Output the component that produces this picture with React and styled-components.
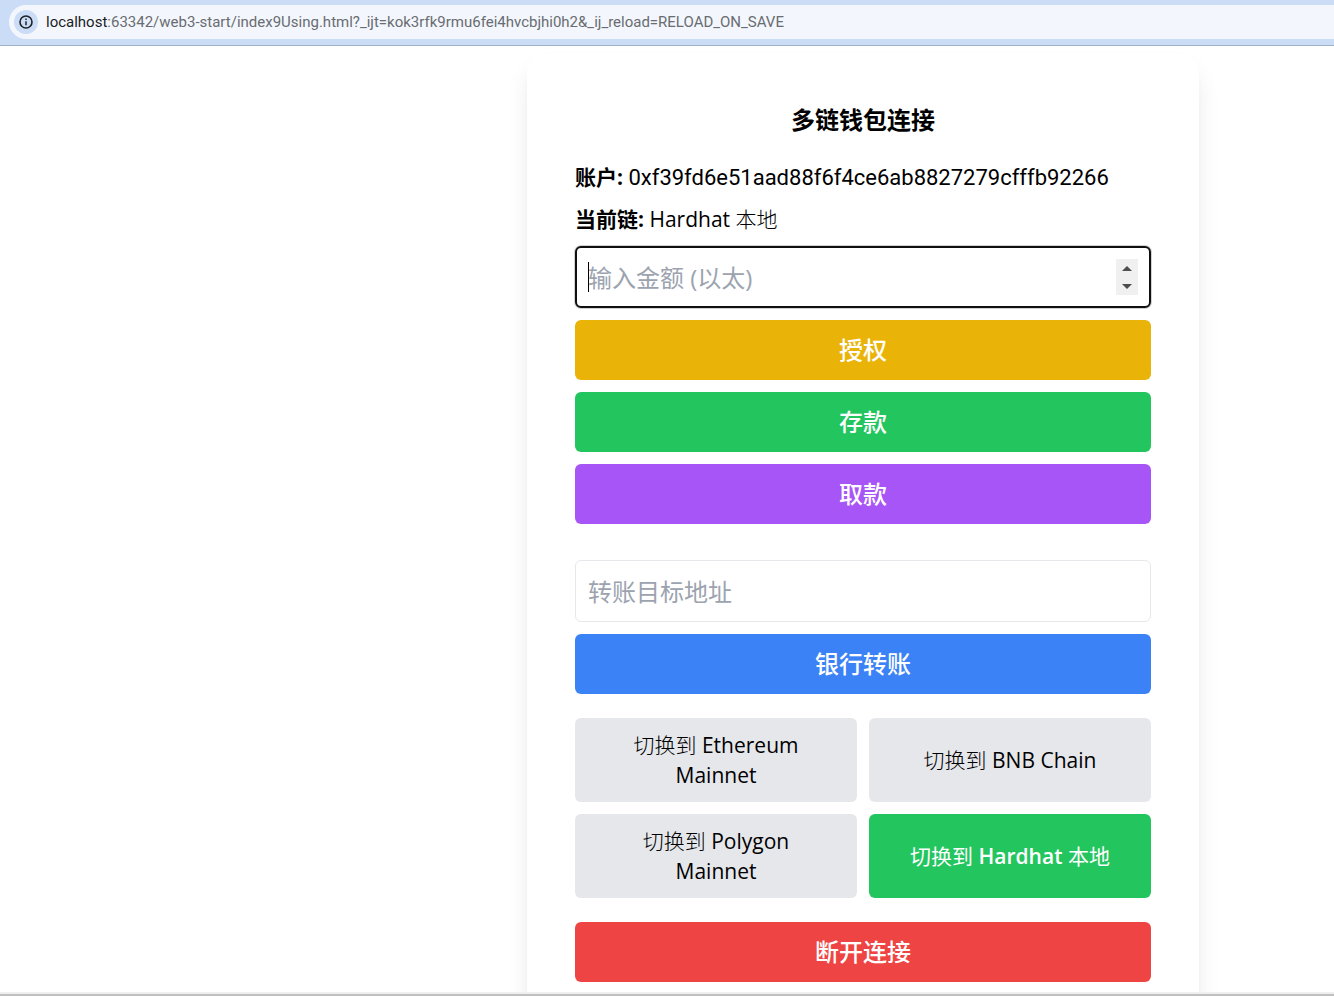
import React, { useRef, useState } from "react";
import styled, { createGlobalStyle } from "styled-components";

const GlobalStyle = createGlobalStyle`
  *, *::before, *::after { box-sizing: border-box; }
  body {
    margin: 0;
    background: #fff;
    color: #000;
    font-family: "Open Sans", "Noto Sans CJK SC", sans-serif;
  }
  button, input { font-family: inherit; color: inherit; }
`;

const Shell = styled.div`
  display: flex;
  flex-direction: column;
  height: 100vh;
`;

const BrowserBar = styled.header`
  flex: none;
  padding: 5px 0 6px 9px;
  background: #cbdcf6;
  border-bottom: 1px solid #9fb1cd;
`;

const AddressField = styled.div`
  display: flex;
  align-items: center;
  gap: 8px;
  height: 34px;
  padding-left: 5px;
  border-radius: 17px 0 0 17px;
  background: #f3f7fd;
`;

const SiteInfo = styled.button`
  display: grid;
  place-items: center;
  width: 24px;
  height: 24px;
  padding: 0;
  border: 0;
  border-radius: 50%;
  background: #cbdcf6;
  color: #1f2328;
`;

const Address = styled.a`
  color: #696c71;
  font-family: Roboto, "Open Sans", sans-serif;
  font-size: 15px;
  line-height: 20px;
  text-decoration: none;
  white-space: nowrap;
`;

const Host = styled.span`
  color: #1b1c1e;
`;

const Viewport = styled.main`
  flex: 1;
  min-height: 0;
  overflow: auto;
  scrollbar-width: none;
  display: grid;
  grid-template-columns: 527fr minmax(auto, 672px) 135fr;
  align-items: start;
  padding-top: 8px;
`;

const Card = styled.section`
  grid-column: 2;
  display: flex;
  flex-direction: column;
  gap: 12px;
  padding: 48px;
  border-radius: 18px;
  background: #fff;
  box-shadow: 0 15px 24px -3px rgba(0, 0, 0, 0.1), 0 6px 9px -6px rgba(0, 0, 0, 0.1);
`;

const Title = styled.h1`
  margin: 0 0 12px;
  font-size: 24px;
  font-weight: 700;
  line-height: 36px;
  text-align: center;
`;

const InfoLine = styled.p`
  margin: 0;
  font-size: 21px;
  line-height: 30px;
`;

const AccountAddress = styled.span`
  font-family: Roboto, "Open Sans", sans-serif;
  font-size: 22px;
  line-height: 1;
`;

const Han = styled.span`
  line-height: 1;
  font-weight: ${({ $strong }) => ($strong ? 400 : 300)};
`;

const Field = styled.label`
  position: relative;
  display: block;
`;

const Input = styled.input`
  display: block;
  width: 100%;
  height: 62px;
  padding: 12px;
  border: 1px solid #e5e7eb;
  border-radius: 6px;
  background: #fff;
  font-size: 24px;
  line-height: 36px;
  caret-color: transparent;
  appearance: textfield;

  &::placeholder { color: #9ca3af; opacity: 1; }
  &::-webkit-inner-spin-button { display: none; }
  &:focus {
    border: 2px solid #101010;
    padding: 11px;
    outline: none;
    box-shadow: 0 0 0 1px #d0d3d1;
  }
`;

const Caret = styled.span`
  position: absolute;
  top: 16px;
  left: 13px;
  width: 1px;
  height: 30px;
  background: #000;
`;

const Stepper = styled.span`
  position: absolute;
  top: 13px;
  right: 13px;
  display: flex;
  flex-direction: column;
  width: 22px;
  height: 36px;
  background: #f0f0f0;
`;

const StepButton = styled.button`
  flex: 1;
  display: grid;
  place-items: center;
  padding: 0;
  border: 0;
  background: transparent;
  color: #4d4d4d;
`;

const tones = {
  yellow: "#eab308",
  green: "#22c55e",
  purple: "#a855f7",
  blue: "#3b82f6",
  red: "#ef4444",
};

const ActionButton = styled.button`
  width: 100%;
  padding: 12px;
  border: 0;
  border-radius: 6px;
  background: ${({ $tone }) => tones[$tone]};
  color: #fff;
  font-size: 24px;
  font-weight: 500;
  line-height: 36px;
`;

const TransferGroup = styled.div`
  display: flex;
  flex-direction: column;
  gap: 12px;
  padding: 24px 0 12px;
`;

const ChainGrid = styled.div`
  display: grid;
  grid-template-columns: 1fr 1fr;
  gap: 12px;
  padding-bottom: 12px;
`;

const ChainButton = styled.button`
  min-height: 84px;
  padding: 12px 36px;
  border: 0;
  border-radius: 6px;
  background: ${({ $active }) => ($active ? "#22c55e" : "#e5e7eb")};
  color: ${({ $active }) => ($active ? "#fff" : "#000")};
  font-size: 21px;
  font-weight: ${({ $active }) => ($active ? 600 : 400)};
  line-height: 30px;
`;

const BottomEdge = styled.footer`
  flex: none;
  height: 4px;
  border-top: 2px solid #efefef;
  background: #c0c0c0;
`;

const chains = [
  { name: "Ethereum Mainnet" },
  { name: "BNB Chain" },
  { name: "Polygon Mainnet" },
  { name: "Hardhat", suffix: "本地" },
];

function InfoIcon() {
  return (
    <svg width="14" height="14" viewBox="0 0 14 14" fill="none" aria-hidden="true">
      <circle cx="7" cy="7" r="6" stroke="currentColor" strokeWidth="1.6" />
      <path d="M7 6.3v4M7 3.6v1.5" stroke="currentColor" strokeWidth="1.5" />
    </svg>
  );
}

export default function App() {
  const amountRef = useRef(null);
  const [amount, setAmount] = useState("");
  const [active, setActive] = useState("Hardhat");

  const step = (direction) => {
    setAmount(String(Number(amount || 0) + direction));
    amountRef.current.focus();
  };

  return (
    <>
      <GlobalStyle />
      <Shell>
        <BrowserBar>
          <AddressField>
            <SiteInfo type="button" aria-label="网站信息"><InfoIcon /></SiteInfo>
            <Address href="#">
              <Host>localhost</Host>:63342/web3-start/index9Using.html?_ijt=kok3rfk9rmu6fei4hvcbjhi0h2&amp;_ij_reload=RELOAD_ON_SAVE
            </Address>
          </AddressField>
        </BrowserBar>
        <Viewport>
          <Card>
            <Title>多链钱包连接</Title>
            <InfoLine><strong>账户:</strong> <AccountAddress>0xf39fd6e51aad88f6f4ce6ab8827279cfffb92266</AccountAddress></InfoLine>
            <InfoLine><strong>当前链:</strong> Hardhat <Han>本地</Han></InfoLine>
            <Field>
              <Input
                ref={amountRef}
                type="number"
                autoFocus
                aria-label="输入金额 (以太)"
                placeholder="输入金额 (以太)"
                value={amount}
                onChange={(e) => setAmount(e.target.value)}
              />
              {amount === "" && <Caret />}
              <Stepper>
                <StepButton type="button" aria-label="增加" onClick={() => step(1)}>
                  <svg width="10" height="5" viewBox="0 0 10 5" fill="currentColor"><path d="M0 5 5 0l5 5z" /></svg>
                </StepButton>
                <StepButton type="button" aria-label="减少" onClick={() => step(-1)}>
                  <svg width="10" height="5" viewBox="0 0 10 5" fill="currentColor"><path d="M0 0h10L5 5z" /></svg>
                </StepButton>
              </Stepper>
            </Field>
            <ActionButton type="button" $tone="yellow">授权</ActionButton>
            <ActionButton type="button" $tone="green">存款</ActionButton>
            <ActionButton type="button" $tone="purple">取款</ActionButton>
            <TransferGroup>
              <Input type="text" aria-label="转账目标地址" placeholder="转账目标地址" />
              <ActionButton type="button" $tone="blue">银行转账</ActionButton>
            </TransferGroup>
            <ChainGrid>
              {chains.map(({ name, suffix }) => (
                <ChainButton key={name} type="button" $active={active === name} onClick={() => setActive(name)}>
                  <Han $strong={active === name}>切换到</Han>
                  {name.split(" ").map((word) => ` ${word}`)}
                  {suffix && <> <Han $strong={active === name}>{suffix}</Han></>}
                </ChainButton>
              ))}
            </ChainGrid>
            <ActionButton type="button" $tone="red">断开连接</ActionButton>
          </Card>
        </Viewport>
        <BottomEdge />
      </Shell>
    </>
  );
}
